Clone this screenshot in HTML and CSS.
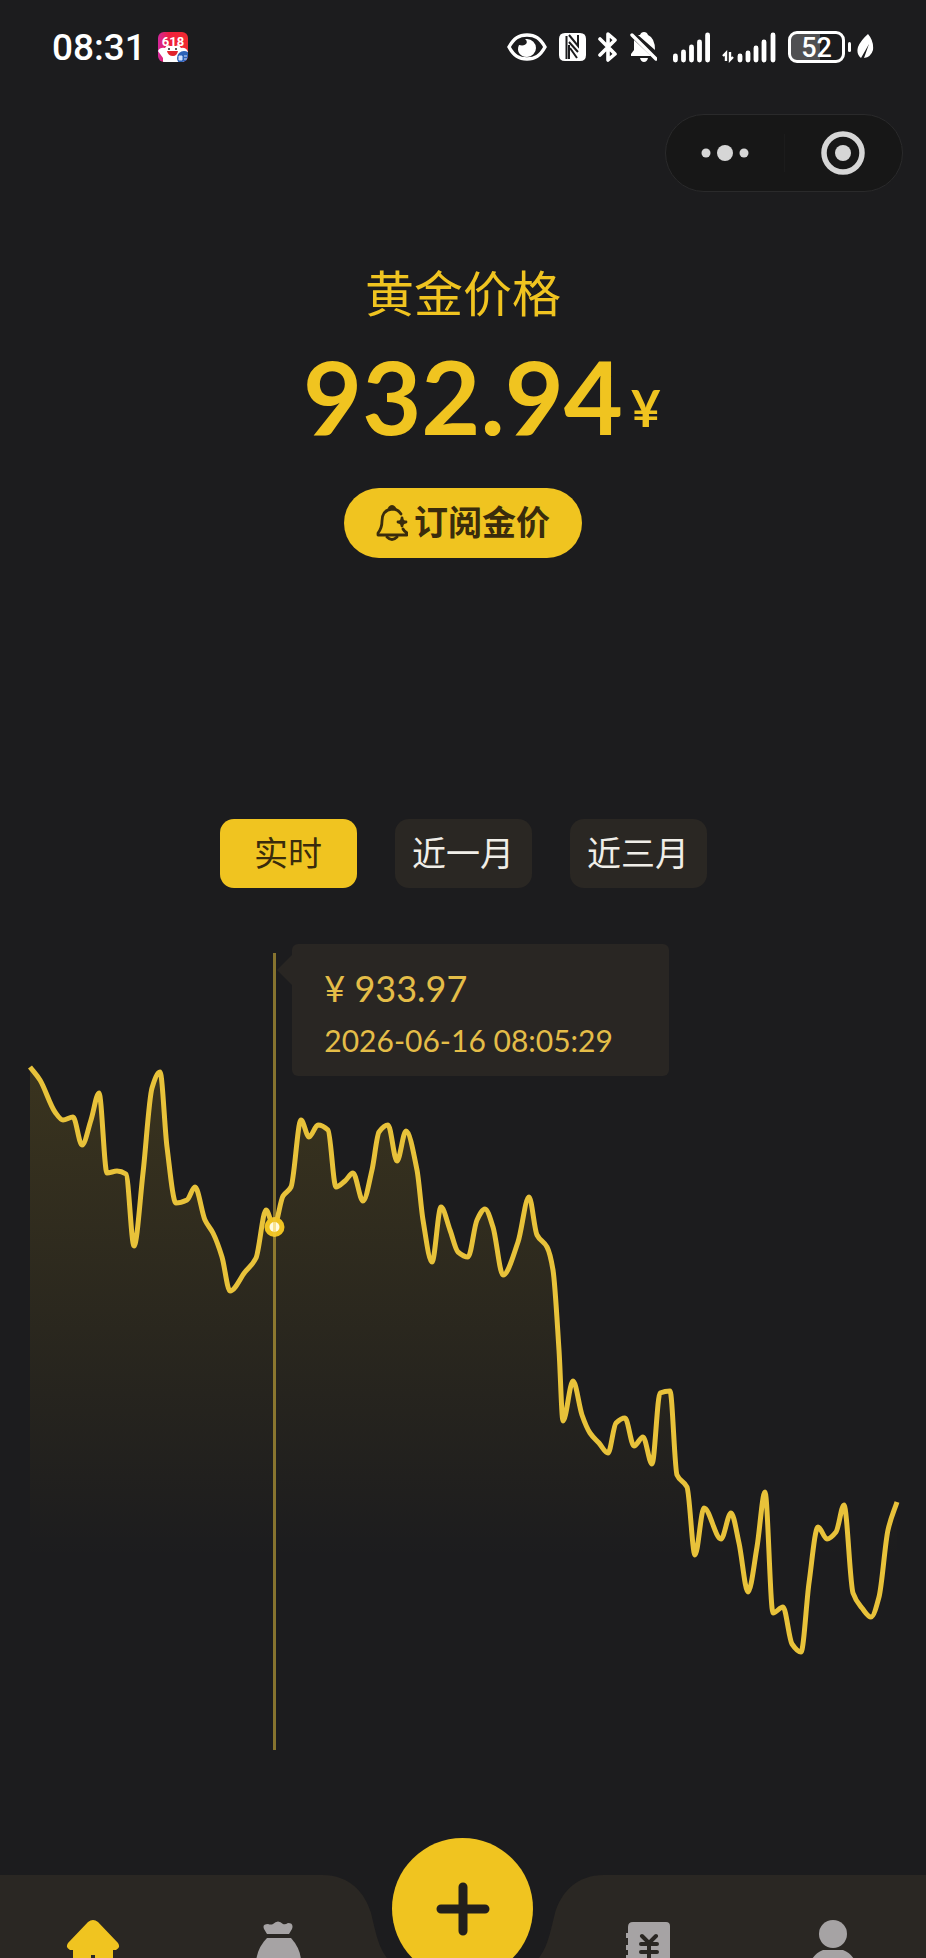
FILE: index.html
```html
<!DOCTYPE html>
<html lang="zh-CN">
<head>
    <meta charset="UTF-8">
    <meta name="viewport" content="width=device-width, initial-scale=1.0">
    <title>黄金价格</title>
    <link rel="stylesheet" href="styles.css">
</head>
<body>
    <header class="status-bar">
        <div class="status-left">
            <span class="time">08:31</span>
            <svg class="app-badge" width="30" height="30" viewBox="0 0 30 30">
                <defs>
                    <linearGradient id="badge-bg" x1="0" y1="0" x2="1" y2="0">
                        <stop offset="0" stop-color="#d3269a"/>
                        <stop offset="0.4" stop-color="#f0203c"/>
                        <stop offset="1" stop-color="#f02a30"/>
                    </linearGradient>
                    <clipPath id="badge-clip"><rect width="30" height="30" rx="6"/></clipPath>
                </defs>
                <g clip-path="url(#badge-clip)">
                    <rect width="30" height="30" fill="url(#badge-bg)"/>
                    <path d="M0 19 Q2 15 7 16 Q9 12 12 14 H18 Q21 12 23 16 Q28 15 30 20 L26 24 V30 H5 V26 Z" fill="#fff"/>
                    <path d="M9 19 H20 Q19 24 15 24 Q10 24 9 19 Z" fill="#e0242c"/>
                    <circle cx="11" cy="17" r="1" fill="#222"/>
                    <circle cx="18" cy="17" r="1" fill="#222"/>
                    <circle cx="26" cy="26" r="7" fill="#2d62b8"/>
                    <path d="M21 24 h3 v4 h-3 z M26 24 h3 M26 27 h3" stroke="#cfe0ff" fill="#cfe0ff"/>
                    <text class="badge-text" x="15" y="14" text-anchor="middle">618</text>
                </g>
            </svg>
        </div>
        <div class="status-right">
            <!-- eye -->
            <svg width="40" height="28" viewBox="0 0 40 28">
                <path d="M2 14 C7 5 12 2 20 2 S33 5 38 14 C33 23 28 26 20 26 S7 23 2 14 Z" fill="none" stroke="#fff" stroke-width="3.4"/>
                <path d="M18 6 C22 9 19 14 12 12 C9 18 13 24 20 24 A9 9 0 0 0 20 6 Z" fill="#fff"/>
            </svg>
            <!-- nfc -->
            <svg width="27" height="28" viewBox="0 0 27 28">
                <path d="M6 0 H21 Q27 0 27 6 V22 Q27 28 21 28 H6 Q0 28 0 22 V6 Q0 0 6 0 Z" fill="#fff"/>
                <path d="M7.500 26 V3 M10 2 L19 13 V2 M10 9 L19 19 M10 12 V26 M11 15 L18 25" fill="none" stroke="#1c1c1e" stroke-width="2"/>
            </svg>
            <!-- bluetooth -->
            <svg width="20" height="32" viewBox="0 0 20 32">
                <path d="M2 8 L17 23 L10 29 V3 L17 9 L2 24" fill="none" stroke="#fff" stroke-width="3.6" stroke-linejoin="round" stroke-linecap="round"/>
            </svg>
            <!-- muted -->
            <svg width="27" height="32" viewBox="0 0 27 32">
                <path d="M10 4 Q11 1 14 1 Q17 1 18 4 Q25 7 25 19 L8 4 Z M4 9 L21 25 H1 V23 L4 19 Z M10 27 H18 Q17 31 14 31 Q11 31 10 27 Z" fill="#fff"/>
                <path d="M2 4 L26 28" stroke="#fff" stroke-width="3.4" stroke-linecap="round"/>
            </svg>
            <!-- signal 1 -->
            <svg class="signal" width="37" height="32" viewBox="0 0 37 32">
                <path d="M2.400 25 V29 M10.500 21 V29 M18.500 16 V29 M26.500 11 V29 M34.600 4 V29" stroke="#fff" stroke-width="4.800" stroke-linecap="round"/>
            </svg>
            <!-- signal 2 -->
            <svg width="54" height="32" viewBox="0 0 54 32">
                <path d="M1 25 L4 22 V30 M8 21 V29 L11 26" fill="none" stroke="#fff" stroke-width="2.400"/>
                <path d="M18 25 V29 M26 22 V29 M34 17 V29 M42 11 V29 M51 4 V29" stroke="#fff" stroke-width="4.800" stroke-linecap="round"/>
            </svg>
            <div class="power">
                <span class="battery">52</span>
                <span class="battery-cap"></span>
                <svg width="17" height="26" viewBox="0 0 17 26">
                    <path d="M11 0 Q17 7 16 16 Q14 23 7 24 L12 10 L4 24 Q-1 20 1 13 Q4 6 11 0 Z" fill="#fff"/>
                </svg>
            </div>
        </div>
    </header>

    <nav class="capsule-row">
        <div class="capsule">
            <button class="capsule-btn" aria-label="更多">
                <svg width="50" height="18" viewBox="0 0 50 18" fill="#d6d6d6">
                    <circle cx="6" cy="9" r="4.500"/>
                    <circle cx="25" cy="9" r="8"/>
                    <circle cx="44" cy="9" r="4.500"/>
                </svg>
            </button>
            <span class="capsule-line"></span>
            <button class="capsule-btn" aria-label="关闭">
                <svg width="44" height="44" viewBox="0 0 44 44">
                    <circle cx="22" cy="22" r="19" fill="none" stroke="#d6d6d6" stroke-width="5.500"/>
                    <circle cx="22" cy="22" r="8" fill="#d6d6d6"/>
                </svg>
            </button>
        </div>
    </nav>

    <main>
        <section class="price-box">
            <h1>黄金价格</h1>
            <p class="price">
                <span class="price-value">932.94</span>
                <span class="price-unit">¥</span>
            </p>
            <button class="subscribe">
                <svg width="32" height="36" viewBox="0 0 32 36" fill="none" stroke="#3a2c0c" stroke-width="2.800" stroke-linejoin="round" stroke-linecap="round">
                    <path d="M25 9 Q22 4 16 4 Q6 5 6 16 Q6 23 2 28 V30 H31 V28 Q28 26 27 24"/>
                    <path d="M13.500 3 Q16 0 18.500 3"/>
                    <path d="M11 32 Q16 37 21 32"/>
                    <path d="M26 13 Q26 17 30 17 Q26 17 26 21 Q26 17 22 17 Q26 17 26 13 Z"/>
                </svg>
                <span>订阅金价</span>
            </button>
        </section>

        <div class="range">
            <button class="range-btn active">实时</button>
            <button class="range-btn">近一月</button>
            <button class="range-btn">近三月</button>
        </div>

        <section class="chart">
            <svg class="chart-svg" viewBox="0 950 926 804">
                <defs>
                    <linearGradient id="area-fill" gradientUnits="userSpaceOnUse" x1="0" y1="1067" x2="0" y2="1560">
                        <stop offset="0" stop-color="#f0c420" stop-opacity="0.140"/>
                        <stop offset="1" stop-color="#f0c420" stop-opacity="0"/>
                    </linearGradient>
                </defs>
                <path id="area" fill="url(#area-fill)"/>
                <path id="line" fill="none" stroke="#e8c23a" stroke-width="5" stroke-linejoin="round"/>
                <circle cx="274.500" cy="1227" r="10" fill="#efc322"/>
                <circle cx="274.500" cy="1227" r="5" fill="#fffbe0"/>
                <path d="M274.500 953 V1750" stroke="#efc940" stroke-opacity="0.500" stroke-width="3"/>
            </svg>
            <div class="tooltip">
                <p class="tooltip-price">¥ 933.97</p>
                <p class="tooltip-time">2026-06-16 08:05:29</p>
            </div>
        </section>
    </main>

    <nav class="tabbar">
        <svg class="tabbar-bg" viewBox="0 0 926 140" preserveAspectRatio="none">
            <path d="M0 0 H322 C350 0 365 18 371 38 C377 62 378 72 390 87 Q420 120 463 120 Q506 120 536 87 C548 72 549 62 555 38 C561 18 576 0 604 0 H926 V140 H0 Z" fill="#2a2723"/>
        </svg>
        <a class="tab" href="#" aria-label="首页">
            <svg width="54" height="60" viewBox="0 0 54 60" fill="#f0c420">
                <path d="M22 2 Q27 -2 32 2 L52 23 Q55 28 50 30 H47 V56 H7 V30 H4 Q-1 28 2 23 Z"/>
                <path d="M27 35 V48" stroke="#2a2723" stroke-width="4"/>
            </svg>
        </a>
        <a class="tab" href="#" aria-label="资产">
            <svg width="54" height="60" viewBox="0 0 54 60" fill="#a6a3a4">
                <path d="M16 14 L13 9 Q11 4 17 4 Q20 5 22 4 Q27 -1 32 4 Q34 5 37 3 Q43 3 41 9 L38 14 Z"/>
                <path d="M16 18 H40 Q50 29 50 42 Q50 58 28 58 Q5 58 5 42 Q6 28 16 18 Z"/>
            </svg>
        </a>
        <button class="fab" aria-label="添加">
            <svg width="54" height="54" viewBox="0 0 54 54">
                <path d="M27 5 V49 M5 27 H49" stroke="#221f1c" stroke-width="9" stroke-linecap="round"/>
            </svg>
        </button>
        <a class="tab" href="#" aria-label="账单">
            <svg width="54" height="60" viewBox="0 0 54 60">
                <path d="M12 2 H45 Q49 2 49 6 V58 H7 V50 h-2 v-4 h2 v-7 h-2 v-4 h2 v-5 h-2 v-5 h2 v-7 h-2 v-5 h2 V7 Q7 2 12 2 Z" fill="#a6a3a4"/>
                <path d="M21 16 L28 23 L35 16 M20 24 H36 M20 32 H36 M28 24 V40" fill="none" stroke="#2a2723" stroke-width="4" stroke-linecap="round"/>
            </svg>
        </a>
        <a class="tab" href="#" aria-label="我的">
            <svg width="54" height="60" viewBox="0 0 54 60" fill="#a6a3a4">
                <circle cx="27" cy="14" r="14"/>
                <path d="M17 30 H37 Q52 36 52 56 H2 Q2 36 17 30 Z"/>
            </svg>
        </a>
    </nav>

    <script>
        // x, y of every price sample
        const points = [
            [30, 1067], [40, 1080], [55, 1112], [63, 1120], [73, 1117], [82, 1145],
            [91, 1120], [99, 1093], [107, 1173], [117, 1171], [126, 1174], [134, 1246],
            [143, 1173], [152, 1088], [160, 1072], [167, 1147], [176, 1203], [187, 1200],
            [195, 1187], [205, 1220], [213, 1233], [222, 1257], [230, 1291], [245, 1272],
            [256, 1258], [266, 1210], [274, 1227], [283, 1196], [291, 1187], [301, 1120],
            [309, 1137], [318, 1125], [328, 1130], [336, 1187], [345, 1181], [353, 1173],
            [363, 1201], [372, 1170], [379, 1132], [388, 1125], [397, 1161], [406, 1131],
            [417, 1170], [423, 1220], [432, 1262], [441, 1207], [450, 1230], [458, 1252],
            [468, 1257], [477, 1220], [485, 1209], [493, 1227], [503, 1275], [518, 1242],
            [529, 1197], [537, 1235], [547, 1247], [553, 1270], [559, 1350], [563, 1421],
            [573, 1381], [582, 1415], [590, 1433], [599, 1443], [608, 1453], [616, 1423],
            [625, 1418], [634, 1446], [643, 1437], [652, 1464], [660, 1393], [670, 1391],
            [677, 1475], [687, 1487], [695, 1555], [704, 1508], [721, 1539], [731, 1513],
            [739, 1543], [748, 1592], [757, 1547], [765, 1492], [773, 1613], [783, 1607],
            [792, 1644], [801, 1652], [809, 1583], [818, 1527], [827, 1539], [836, 1532],
            [844, 1505], [853, 1593], [862, 1608], [871, 1617], [879, 1597], [888, 1530],
            [897, 1502]
        ];

        function slope(i) {
            const last = points.length - 1;
            const prev = i > 0 ? (points[i][1] - points[i - 1][1]) / (points[i][0] - points[i - 1][0]) : null;
            const next = i < last ? (points[i + 1][1] - points[i][1]) / (points[i + 1][0] - points[i][0]) : null;
            if (prev === null) return next;
            if (next === null) return prev;
            if (prev * next <= 0) return 0;
            return 2 * prev * next / (prev + next);
        }

        // monotone curve through all points
        function smoothPath() {
            let d = `M${points[0][0]} ${points[0][1]}`;
            for (let i = 1; i < points.length; i++) {
                const [x0, y0] = points[i - 1];
                const [x1, y1] = points[i];
                const dx = (x1 - x0) / 3;
                d += ` C${x0 + dx} ${y0 + dx * slope(i - 1)} ${x1 - dx} ${y1 - dx * slope(i)} ${x1} ${y1}`;
            }
            return d;
        }

        const line = smoothPath();
        document.getElementById('line').setAttribute('d', line);
        document.getElementById('area').setAttribute('d', `${line} V1750 H30 Z`);
    </script>
</body>
</html>
```

FILE: styles.css
```css
* {
    box-sizing: border-box;
}

body {
    margin: 0;
    height: 100vh;
    overflow: hidden;
    background-color: #1c1c1e;
    color: #f0c420;
    font-family: Lato, "Noto Sans CJK SC", sans-serif;
}

h1, p {
    margin: 0;
}

button {
    border: none;
    padding: 0;
    font-family: inherit;
    cursor: pointer;
}

svg {
    display: block;
    flex-shrink: 0;
}

/* status bar */
.status-bar {
    display: flex;
    justify-content: space-between;
    align-items: center;
    height: 94px;
    padding: 0 52px;
    color: #fff;
    font-family: Roboto, sans-serif;
    font-weight: 500;
}

.status-left,
.status-right,
.power {
    display: flex;
    align-items: center;
}

.status-left,
.status-right {
    gap: 12px;
}

.time {
    font-size: 37px;
}

.badge-text {
    font-size: 13px;
    font-weight: 700;
    fill: #fff;
}

.signal {
    margin-left: 4px;
}

.battery {
    width: 57px;
    height: 32px;
    border: 3px solid #fff;
    border-radius: 9px;
    background: linear-gradient(to right, #505052 56%, transparent 56%);
    font-size: 27px;
    line-height: 28px;
    text-align: center;
}

.battery-cap {
    width: 3px;
    height: 10px;
    margin: 0 6px 0 3px;
    border-radius: 2px;
    background-color: #fff;
}

/* capsule */
.capsule-row {
    display: flex;
    justify-content: flex-end;
    padding: 20px 23px 0;
}

.capsule {
    display: flex;
    align-items: center;
    width: 238px;
    height: 78px;
    border: 1px solid #2a2a2b;
    border-radius: 39px;
    background-color: #171717;
}

.capsule-btn {
    display: flex;
    flex: 1;
    align-items: center;
    justify-content: center;
    background: none;
}

.capsule-line {
    width: 1px;
    height: 38px;
    background-color: #1c1c1c;
}

/* price */
.price-box {
    display: flex;
    flex-direction: column;
    align-items: center;
    padding-top: 71px;
}

h1 {
    font-size: 49px;
    font-weight: 400;
    line-height: 60px;
}

.price {
    display: grid;
    grid-template-columns: 1fr auto 1fr;
    align-items: center;
    width: 100%;
    margin-top: 13px;
    font-weight: 700;
}

.price-value {
    grid-column: 2;
    font-size: 102px;
    line-height: 120px;
}

.price-unit {
    padding: 24px 0 0 8px;
    font-size: 51px;
    line-height: 60px;
}

.subscribe {
    display: flex;
    align-items: center;
    justify-content: center;
    gap: 6px;
    width: 238px;
    height: 70px;
    margin-top: 32px;
    border-radius: 35px;
    background-color: #f0c420;
    color: #3a2c0c;
    font-size: 34px;
    font-weight: 700;
}

.subscribe span {
    padding-bottom: 6px;
}

/* range buttons */
.range {
    display: flex;
    justify-content: center;
    gap: 38px;
    margin-top: 261px;
}

.range-btn {
    width: 137px;
    height: 69px;
    padding-bottom: 5px;
    border-radius: 14px;
    background-color: #2a2723;
    color: #f0eee8;
    font-size: 34px;
}

.range-btn.active {
    background-color: #f0c420;
    color: #3a2c0c;
}

/* chart */
.chart {
    position: relative;
    margin-top: 62px;
}

.chart-svg {
    width: 100%;
}

.tooltip {
    position: absolute;
    top: -6px;
    left: 32%;
    width: 377px;
    height: 132px;
    margin-left: -4px;
    padding: 20px 32px;
    border-radius: 6px;
    background-color: #292623;
    color: #e4bd48;
}

.tooltip::before {
    content: "";
    position: absolute;
    top: 11px;
    left: -15px;
    border: 15px solid transparent;
    border-left: none;
    border-right-color: #292623;
}

.tooltip-price {
    font-size: 36px;
    line-height: 48px;
}

.tooltip-time {
    margin-top: 4px;
    font-size: 30px;
    line-height: 48px;
}

/* bottom tabs */
.tabbar {
    position: relative;
    display: grid;
    grid-template-columns: repeat(5, 1fr);
    justify-items: center;
    height: 140px;
    margin-top: 121px;
}

.tabbar-bg {
    position: absolute;
    width: 100%;
    height: 100%;
}

.tab {
    position: relative;
    padding-top: 45px;
}

.fab {
    position: relative;
    display: flex;
    align-items: center;
    justify-content: center;
    width: 141px;
    height: 141px;
    margin-top: -37px;
    border-radius: 50%;
    background-color: #f0c420;
}
```
